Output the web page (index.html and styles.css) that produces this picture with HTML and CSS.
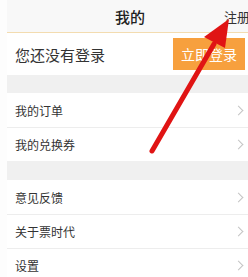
FILE: index.html
```html
<!DOCTYPE html>
<html lang="zh">
<head>
<meta charset="utf-8">
<link rel="stylesheet" href="styles.css">
</head>
<body>
<div class="page">
  <header class="header">
    <span class="title">我的</span>
    <span class="register">注册</span>
  </header>
  <section class="login">
    <span class="login-text">您还没有登录</span>
    <button class="login-btn">立即登录</button>
  </section>
  <div class="gap"></div>
  <ul class="group">
    <li class="row"><span>我的订单</span><i class="chev"></i></li>
    <li class="row"><span>我的兑换券</span><i class="chev"></i></li>
  </ul>
  <div class="gap gap2"></div>
  <ul class="group">
    <li class="row"><span>意见反馈</span><i class="chev"></i></li>
    <li class="row"><span>关于票时代</span><i class="chev"></i></li>
    <li class="row"><span>设置</span><i class="chev"></i></li>
  </ul>
</div>
<svg class="arrow" width="248" height="277" viewBox="0 0 248 277">
  <line x1="152" y1="151" x2="214" y2="44" stroke="#e01414" stroke-width="5" stroke-linecap="round"/>
  <polygon points="229,19 204,37 225,48" fill="#e01414"/>
</svg>
</body>
</html>
```
FILE: styles.css
```css
* { box-sizing: border-box; margin: 0; padding: 0; }
html, body { width: 248px; height: 277px; overflow: hidden; background: #fdfdfd; }
body {
  font-family: "Noto Sans CJK SC", "Noto Sans", sans-serif;
  color: #333;
  position: relative;
  padding-left: 7px;
}
.page { background: #f0f0f0; height: 277px; }
.header {
  height: 33px;
  background: #f8f8f8;
  border-bottom: 1px solid #f3dcb0;
  display: flex;
  align-items: center;
  justify-content: center;
  position: relative;
}
.title { font-size: 15px; font-weight: 500; color: #222; margin-left: 5px; }
.register {
  position: absolute;
  left: 217px;
  top: 7px;
  font-size: 13px;
  color: #333;
  white-space: nowrap;
}
.login {
  height: 42px;
  background: #fff;
  display: flex;
  align-items: center;
  justify-content: space-between;
  padding: 0 3px 0 8px;
}
.login-text { font-size: 15px; color: #333; }
.login-btn {
  width: 72px;
  height: 32px;
  border: none;
  background: #f7a03e;
  color: #fff;
  font-family: inherit;
  font-size: 14px;
}
.gap { height: 18px; }
.gap2 { height: 19px; }
.group { list-style: none; background: #fff; }
.row {
  height: 34px;
  display: flex;
  align-items: center;
  justify-content: space-between;
  padding: 0 6px 0 8px;
  border-top: 1px solid #ededed;
  font-size: 12px;
  color: #333;
}
.group .row:first-child { border-top: none; }
.chev {
  width: 7px;
  height: 7px;
  border-right: 1px solid #c4c4c4;
  border-top: 1px solid #c4c4c4;
  transform: rotate(45deg);
}
.arrow { position: absolute; left: 0; top: 0; pointer-events: none; }
```
